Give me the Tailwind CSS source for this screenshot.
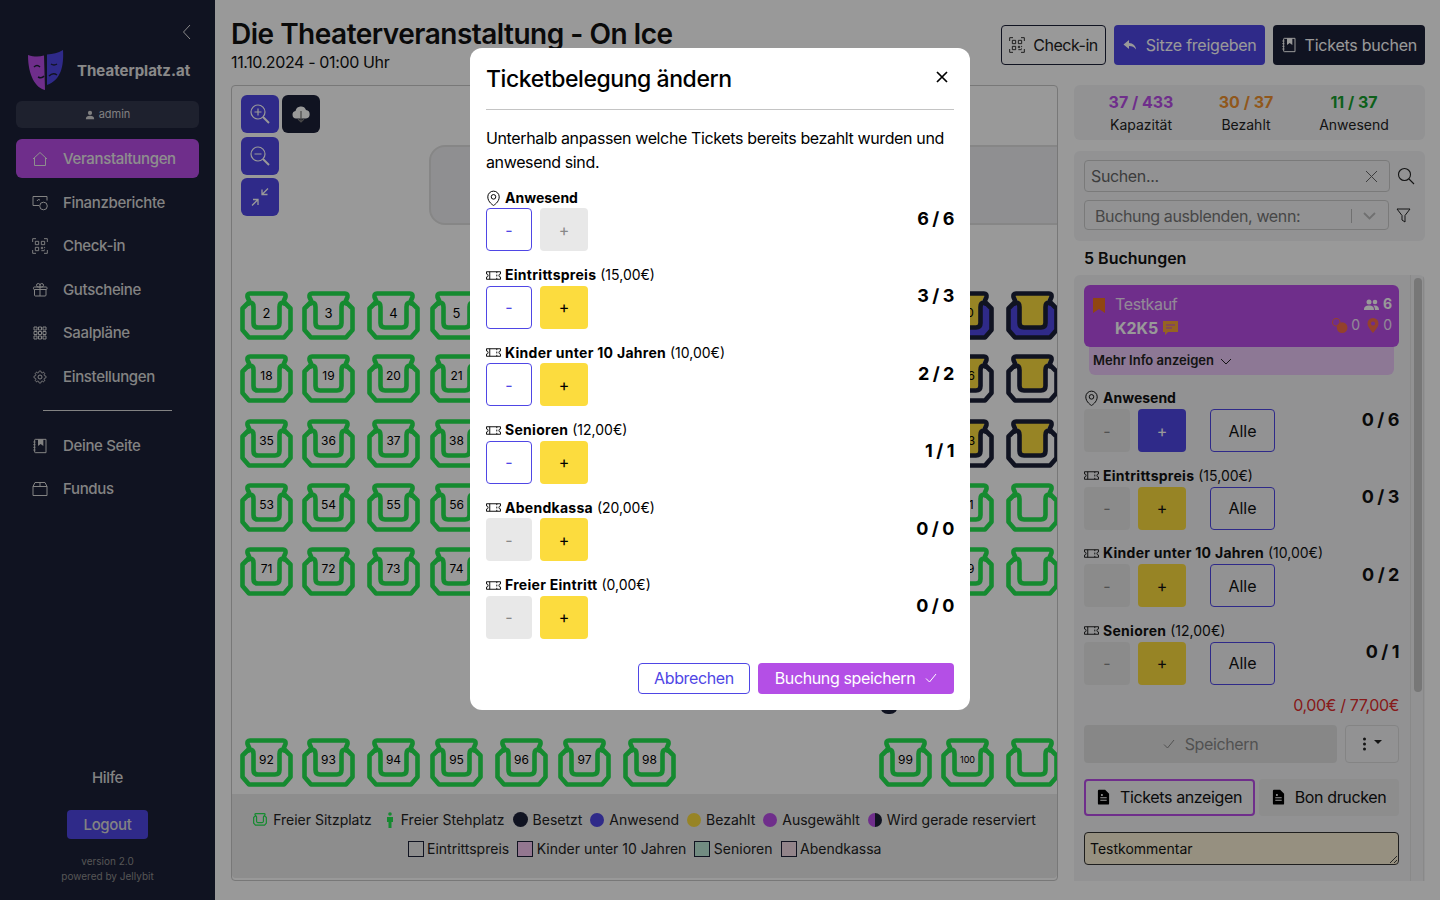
<!DOCTYPE html>
<html lang="de">
<head>
<meta charset="utf-8">
<title>Theaterplatz.at</title>
<script src="https://cdn.jsdelivr.net/npm/@tailwindcss/browser@4"></script>
</head>
<body class="font-[Inter,sans-serif] text-[#111] bg-white">
<svg class="hidden">
  <symbol id="seat" viewBox="0 0 53 50"><path fill="none" stroke="currentColor" stroke-width="4.600" stroke-linejoin="round" d="M11 14 L7.500 6 Q7 2.500 10 2.500 H43 Q46 2.500 45.500 6 L42 14 M13.500 16 Q13.500 11.500 10 11.500 H8.500 L2.500 17.500 V39 L9 46.500 H44 L50.500 39 V17.500 L44.500 11.500 H43 Q39.500 11.500 39.500 16 V32 Q39.500 36.500 35 36.500 H18 Q13.500 36.500 13.500 32 Z"/></symbol>
  <symbol id="gold" viewBox="0 0 53 50"><path fill="#fcdc3e" d="M9 4 H44 L39 14 V35 H14 V14 Z"/></symbol>
  <symbol id="blue" viewBox="0 0 53 50"><path fill="#4f46e5" d="M13.500 16 Q13.500 11.500 10 11.500 H8.500 L2.500 17.500 V39 L9 46.500 H44 L50.500 39 V17.500 L44.500 11.500 H43 Q39.500 11.500 39.500 16 V32 Q39.500 36.500 35 36.500 H18 Q13.500 36.500 13.500 32 Z"/></symbol>
  <symbol id="ticket" viewBox="0 0 16 11"><path fill="none" stroke="currentColor" stroke-width="1" d="M.5 1.500h15v2.300a1.700 1.700 0 000 3.400v2.300H.5V7.200a1.700 1.700 0 000-3.400z M4 1.500v8 M11.500 1.500v1.500 M11.500 4.500v2 M11.500 8v1.500"/></symbol>
  <symbol id="pin" viewBox="3 1.500 18 21"><path fill="none" stroke="currentColor" stroke-width="1.300" d="M15 10.500a3 3 0 11-6 0 3 3 0 016 0z M19.500 10.500c0 7.142-7.500 11.250-7.500 11.250S4.500 17.642 4.500 10.500a7.500 7.500 0 1115 0z"/></symbol>
  <symbol id="qr" viewBox="0 0 24 24"><path fill="none" stroke="currentColor" stroke-width="1.400" d="M1 6V1h5 M18 1h5v5 M23 18v5h-5 M6 23H1v-5 M5 5h5v5H5z M14 5h5v5h-5z M5 14h5v5H5z M14 14h2v2h-2z M18 14h1v1 M14 19h5 M18 17h1"/></symbol>
  <symbol id="book" viewBox="0 0 24 24"><path fill="none" stroke="currentColor" stroke-width="1.500" d="M5 2h16v20H5a1 1 0 01-1-1V3a1 1 0 011-1z M2 6h3 M2 10h3 M2 14h3 M2 18h3"/><path fill="currentColor" d="M9 2h8v10l-4-3-4 3z"/></symbol>
  <symbol id="doc" viewBox="0 0 16 20"><path fill="currentColor" d="M2 1h8l5 5v12a1.500 1.500 0 01-1.500 1.500h-11A1.500 1.500 0 011 18V2.500A1.500 1.500 0 012 1z"/><path fill="none" stroke="#fff" stroke-width="1.300" d="M4 11h8 M4 14h8"/><circle cx="6" cy="7.500" r="1.300" fill="#fff"/></symbol>
</svg>

<div class="relative flex h-[900px] w-[1440px] overflow-hidden">
  <aside class="flex w-[215px] shrink-0 flex-col bg-[#1c2038] px-4 text-[#e5e5e5]">
    <div class="flex h-[50px] items-start justify-end pt-[24px] pr-1">
      <svg class="h-4 w-4" viewBox="0 0 16 16" fill="none" stroke="currentColor" stroke-width="1"><path d="M11 1 L4.500 8 L11 15"/></svg>
    </div>
    <div class="flex h-[51px] items-start pl-3">
      <svg class="h-10 w-9 shrink-0" viewBox="0 0 36 40">
        <path fill="#b94ee8" d="M0 5 C6 7 11 7 16 5.500 L17 40 C8 38 0 26 0 5z"/>
        <path fill="#4f46e5" d="M19 4.500 C25 4 30 3 35 0 C36 16 33 30 19 35z"/>
        <path fill="none" stroke="#1c2038" stroke-width="1.500" d="M6 17 q3 -3 6 0 M10 27 q4 2 6 -1 M23 14 q3 2 6 0 M21 26 q4 -4 8 -1"/>
      </svg>
      <span class="ml-[13px] mt-[12px] text-[15px] font-bold leading-[18px] whitespace-nowrap">Theaterplatz.at</span>
    </div>
    <div class="flex h-[27px] items-center justify-center gap-1 rounded-md bg-[#33374e] text-[11px] text-[#d6d6d6]">
      <svg class="h-2.5 w-2.5" viewBox="0 0 12 12" fill="currentColor"><circle cx="6" cy="3.500" r="2.500"/><path d="M1 11c0-3 2-4 5-4s5 1 5 4z"/></svg>admin
    </div>
    <nav class="mt-[11px] flex flex-col gap-[4.500px] text-[15px] font-medium tracking-[-0.023em] text-[#dadada]">
      <a class="flex h-[39px] items-center gap-[15px] rounded-md bg-[#b94ee8] pl-4 pt-[1.500px] text-[#ededed]"><svg class="h-4 w-4 shrink-0" viewBox="0 0 16 16" fill="none" stroke="currentColor"><path d="M1 8 L8 1.500 L15 8 M2.500 7 V14.500 H13.500 V7"/></svg>Veranstaltungen</a>
      <a class="flex h-[39px] items-center gap-[15px] pl-4 pt-[1.500px]"><svg class="h-4 w-4 shrink-0" viewBox="0 0 16 16" fill="none" stroke="currentColor"><path d="M7 10.500H1V1.500H15V5.500 M8 5a2 2 0 00-3 1"/><circle cx="11.500" cy="11" r="3.800"/></svg>Finanzberichte</a>
      <a class="flex h-[39px] items-center gap-[15px] pl-4 pt-[1.500px]"><svg class="h-4 w-4 shrink-0"><use href="#qr"/></svg>Check-in</a>
      <a class="flex h-[39px] items-center gap-[15px] pl-4 pt-[1.500px]"><svg class="h-4 w-4 shrink-0" viewBox="0 0 24 24" fill="none" stroke="currentColor" stroke-width="1.500"><path d="M21 11.250v8.250a1.500 1.500 0 01-1.500 1.500H5.250a1.500 1.500 0 01-1.500-1.500v-8.250M12 4.875A2.625 2.625 0 109.375 7.500H12m0-2.625V7.500m0-2.625A2.625 2.625 0 1114.625 7.500H12m0 0V21m-8.625-9.750h18c.621 0 1.125-.504 1.125-1.125v-1.500c0-.621-.504-1.125-1.125-1.125h-18c-.621 0-1.125.504-1.125 1.125v1.500c0 .621.504 1.125 1.125 1.125z"/></svg>Gutscheine</a>
      <a class="flex h-[39px] items-center gap-[15px] pl-4 pt-[1.500px]"><svg class="h-4 w-4 shrink-0" viewBox="0 0 16 16" fill="none" stroke="currentColor"><path d="M2 2h3v3H2z M6.500 2h3v3h-3z M11 2h3v3h-3z M2 6.500h3v3H2z M6.500 6.500h3v3h-3z M11 6.500h3v3h-3z M2 11h3v3H2z M6.500 11h3v3h-3z M11 11h3v3h-3z"/></svg>Saalpläne</a>
      <a class="flex h-[39px] items-center gap-[15px] pl-4 pt-[1.500px]"><svg class="h-4 w-4 shrink-0" viewBox="0 0 24 24" fill="none" stroke="currentColor" stroke-width="1.500"><path d="M10.343 3.940c.09-.542.56-.94 1.110-.94h1.093c.55 0 1.020.398 1.110.94l.149.894c.07.424.384.764.78.93.398.164.855.142 1.205-.108l.737-.527a1.125 1.125 0 011.450.12l.773.774c.39.389.44 1.002.12 1.450l-.527.737c-.25.35-.272.806-.107 1.204.165.397.505.71.93.78l.893.15c.543.09.94.56.94 1.109v1.094c0 .55-.397 1.020-.94 1.110l-.893.149c-.425.07-.765.383-.93.78-.165.398-.143.854.107 1.204l.527.738c.32.447.269 1.060-.12 1.450l-.774.773a1.125 1.125 0 01-1.449.12l-.738-.527c-.35-.25-.806-.272-1.203-.107-.397.165-.71.505-.781.929l-.149.894c-.09.542-.56.94-1.110.94h-1.094c-.55 0-1.019-.398-1.110-.94l-.148-.894c-.071-.424-.384-.764-.781-.93-.398-.164-.854-.142-1.204.108l-.738.527c-.447.32-1.060.269-1.450-.12l-.773-.774a1.125 1.125 0 01-.12-1.450l.527-.737c.25-.35.273-.806.108-1.204-.165-.397-.505-.71-.93-.78l-.894-.15c-.542-.09-.94-.56-.94-1.109v-1.094c0-.55.398-1.020.94-1.110l.894-.149c.424-.07.765-.383.93-.78.165-.398.143-.854-.107-1.204l-.527-.738a1.125 1.125 0 01.12-1.450l.773-.773a1.125 1.125 0 011.450-.12l.737.527c.35.25.807.272 1.204.107.397-.165.71-.505.78-.929l.15-.894z M15 12a3 3 0 11-6 0 3 3 0 016 0z"/></svg>Einstellungen</a>
      <div class="mx-[27px] my-[10px] h-px bg-[#dadada]"></div>
      <a class="flex h-[39px] items-center gap-[15px] pl-4 pt-[1.500px]"><svg class="h-4 w-4 shrink-0"><use href="#book"/></svg>Deine Seite</a>
      <a class="flex h-[39px] items-center gap-[15px] pl-4 pt-[1.500px]"><svg class="h-4 w-4 shrink-0" viewBox="0 0 16 16" fill="none" stroke="currentColor"><path d="M1 5.500h14v9H1z M1 5.500 L3 1.500 H13 L15 5.500 M8 1.500 V5.500"/></svg>Fundus</a>
    </nav>
    <div class="mt-auto flex flex-col items-center pb-[16px]">
      <span class="pt-[1px] text-[15px] font-medium leading-5 tracking-[-0.023em] text-[#dadada]">Hilfe</span>
      <span class="mt-[22px] flex h-[29px] w-[81px] items-center justify-center rounded bg-[#4f46e5] pt-[2px] text-[15px] font-medium tracking-[-0.023em] text-[#dadada]">Logout</span>
      <span class="mt-[15px] text-[10px] leading-[15px] text-[#8f8f8f]">version 2.0</span>
      <span class="text-[10px] leading-[15px] text-[#8f8f8f]">powered by Jellybit</span>
    </div>
  </aside>

  <main class="flex flex-1 flex-col px-4 pb-[19px]">
    <header class="flex h-[85px] shrink-0 justify-between">
      <div class="pt-[15px]">
        <h1 class="text-[28px] font-semibold leading-[38px] tracking-[-0.018em]">Die Theaterveranstaltung - On Ice</h1>
        <p class="-mt-[3px] text-base leading-6 tracking-[-0.023em]">11.10.2024 - 01:00 Uhr</p>
      </div>
      <div class="mt-[25px] flex h-10 gap-2 text-base tracking-[-0.015em]">
        <span class="flex items-center gap-2 rounded border border-[#1c2038] px-[7px] tracking-[-0.03em] text-[#222]"><svg class="h-4 w-4"><use href="#qr"/></svg>Check-in</span>
        <span class="flex items-center gap-2 rounded bg-[#4f46e5] px-2 text-white"><svg class="h-4 w-4" viewBox="0 0 16 16" fill="currentColor"><path d="M7 3 L1.500 7.500 L7 12 V9 C10 9 12.500 10 14 12.500 C14 9 11 6 7 6z"/></svg><span>Sitze freigeben</span></span>
        <span class="flex items-center gap-2 rounded bg-[#1c2038] px-2 text-white"><svg class="h-4 w-4"><use href="#book"/></svg>Tickets buchen</span>
      </div>
    </header>

    <div class="flex min-h-0 flex-1 gap-4">
      <!-- Saalplan -->
      <section class="relative w-[827px] shrink-0 overflow-hidden rounded border border-[#c8c8c8]">
        <div class="absolute left-[9px] top-[9px] flex flex-col gap-[3.500px]">
          <span class="flex h-[38px] w-[38px] items-center justify-center rounded-md bg-[#4f46e5] text-white"><svg class="h-6 w-6" viewBox="0 0 24 24" fill="none" stroke="currentColor" stroke-width="1.200"><circle cx="10" cy="10" r="7"/><path d="M10 6.500v7 M6.500 10h7"/><path stroke-width="2" d="M15 15l6 6"/></svg></span>
          <span class="flex h-[38px] w-[38px] items-center justify-center rounded-md bg-[#4f46e5] text-white"><svg class="h-6 w-6" viewBox="0 0 24 24" fill="none" stroke="currentColor" stroke-width="1.200"><circle cx="10" cy="10" r="7"/><path d="M6.500 10h7"/><path stroke-width="2" d="M15 15l6 6"/></svg></span>
          <span class="flex h-[38px] w-[38px] items-center justify-center rounded-md bg-[#4f46e5] text-white"><svg class="h-5 w-5" viewBox="0 0 20 20" fill="none" stroke="currentColor" stroke-width="1.300"><path d="M18 1.500 L12 7.500 M12 2.500 V7.500 H17.500 M2 18.500 L8 12.500 M3 12.500 H8 V18"/></svg></span>
        </div>
        <span class="absolute left-[50px] top-[9px] flex h-[38px] w-[38px] items-center justify-center rounded-md bg-[#1c2038] text-white"><svg class="h-5 w-5" viewBox="0 0 20 20"><path fill="currentColor" d="M5 14.500a3.800 3.800 0 01-.5-7.500A5.500 5.500 0 0115 6a4.300 4.300 0 010 8.500z"/><path fill="none" stroke="#777" stroke-width="1.200" d="M10 7v11 M7 15l3 3 3-3"/></svg></span>
        <div class="absolute left-[197px] top-[59px] h-[80px] w-[800px] rounded-2xl border-2 border-[#e0e0e0] bg-[#efeff2]"></div>

        <!-- Reihe 1 -->
        <div class="absolute left-[8px] top-[205px] h-[50px] w-[53px] text-[#23e650]"><svg class="h-full w-full"><use href="#seat"/></svg><span class="absolute inset-x-0 top-[15px] text-center text-[13px] leading-[14px] text-black">2</span></div>
        <div class="absolute left-[70px] top-[205px] h-[50px] w-[53px] text-[#23e650]"><svg class="h-full w-full"><use href="#seat"/></svg><span class="absolute inset-x-0 top-[15px] text-center text-[13px] leading-[14px] text-black">3</span></div>
        <div class="absolute left-[135px] top-[205px] h-[50px] w-[53px] text-[#23e650]"><svg class="h-full w-full"><use href="#seat"/></svg><span class="absolute inset-x-0 top-[15px] text-center text-[13px] leading-[14px] text-black">4</span></div>
        <div class="absolute left-[198px] top-[205px] h-[50px] w-[53px] text-[#23e650]"><svg class="h-full w-full"><use href="#seat"/></svg><span class="absolute inset-x-0 top-[15px] text-center text-[13px] leading-[14px] text-black">5</span></div>
        <div class="absolute left-[709px] top-[205px] h-[50px] w-[53px] text-[#1c2038]"><svg class="absolute inset-0 h-full w-full"><use href="#blue"/></svg><svg class="absolute inset-0 h-full w-full"><use href="#gold"/></svg><svg class="absolute inset-0 h-full w-full"><use href="#seat"/></svg><span class="absolute inset-x-0 top-[15px] text-center text-[12px] leading-[14px] text-black">10</span></div>
        <div class="absolute left-[774px] top-[205px] h-[50px] w-[53px] text-[#1c2038]"><svg class="absolute inset-0 h-full w-full"><use href="#blue"/></svg><svg class="absolute inset-0 h-full w-full"><use href="#gold"/></svg><svg class="absolute inset-0 h-full w-full"><use href="#seat"/></svg></div>
        <!-- Reihe 2 -->
        <div class="absolute left-[8px] top-[268px] h-[50px] w-[53px] text-[#23e650]"><svg class="h-full w-full"><use href="#seat"/></svg><span class="absolute inset-x-0 top-[15px] text-center text-[12px] leading-[14px] text-black">18</span></div>
        <div class="absolute left-[70px] top-[268px] h-[50px] w-[53px] text-[#23e650]"><svg class="h-full w-full"><use href="#seat"/></svg><span class="absolute inset-x-0 top-[15px] text-center text-[12px] leading-[14px] text-black">19</span></div>
        <div class="absolute left-[135px] top-[268px] h-[50px] w-[53px] text-[#23e650]"><svg class="h-full w-full"><use href="#seat"/></svg><span class="absolute inset-x-0 top-[15px] text-center text-[12px] leading-[14px] text-black">20</span></div>
        <div class="absolute left-[198px] top-[268px] h-[50px] w-[53px] text-[#23e650]"><svg class="h-full w-full"><use href="#seat"/></svg><span class="absolute inset-x-0 top-[15px] text-center text-[12px] leading-[14px] text-black">21</span></div>
        <div class="absolute left-[709px] top-[268px] h-[50px] w-[53px] text-[#1c2038]"><svg class="absolute inset-0 h-full w-full"><use href="#gold"/></svg><svg class="absolute inset-0 h-full w-full"><use href="#seat"/></svg><span class="absolute inset-x-0 top-[15px] text-center text-[12px] leading-[14px] text-black">26</span></div>
        <div class="absolute left-[774px] top-[268px] h-[50px] w-[53px] text-[#1c2038]"><svg class="absolute inset-0 h-full w-full"><use href="#gold"/></svg><svg class="absolute inset-0 h-full w-full"><use href="#seat"/></svg></div>
        <!-- Reihe 3 -->
        <div class="absolute left-[8px] top-[333px] h-[50px] w-[53px] text-[#23e650]"><svg class="h-full w-full"><use href="#seat"/></svg><span class="absolute inset-x-0 top-[15px] text-center text-[12px] leading-[14px] text-black">35</span></div>
        <div class="absolute left-[70px] top-[333px] h-[50px] w-[53px] text-[#23e650]"><svg class="h-full w-full"><use href="#seat"/></svg><span class="absolute inset-x-0 top-[15px] text-center text-[12px] leading-[14px] text-black">36</span></div>
        <div class="absolute left-[135px] top-[333px] h-[50px] w-[53px] text-[#23e650]"><svg class="h-full w-full"><use href="#seat"/></svg><span class="absolute inset-x-0 top-[15px] text-center text-[12px] leading-[14px] text-black">37</span></div>
        <div class="absolute left-[198px] top-[333px] h-[50px] w-[53px] text-[#23e650]"><svg class="h-full w-full"><use href="#seat"/></svg><span class="absolute inset-x-0 top-[15px] text-center text-[12px] leading-[14px] text-black">38</span></div>
        <div class="absolute left-[709px] top-[333px] h-[50px] w-[53px] text-[#1c2038]"><svg class="absolute inset-0 h-full w-full"><use href="#gold"/></svg><svg class="absolute inset-0 h-full w-full"><use href="#seat"/></svg><span class="absolute inset-x-0 top-[15px] text-center text-[12px] leading-[14px] text-black">43</span></div>
        <div class="absolute left-[774px] top-[333px] h-[50px] w-[53px] text-[#1c2038]"><svg class="absolute inset-0 h-full w-full"><use href="#gold"/></svg><svg class="absolute inset-0 h-full w-full"><use href="#seat"/></svg></div>
        <!-- Reihe 4 -->
        <div class="absolute left-[8px] top-[397px] h-[50px] w-[53px] text-[#23e650]"><svg class="h-full w-full"><use href="#seat"/></svg><span class="absolute inset-x-0 top-[15px] text-center text-[12px] leading-[14px] text-black">53</span></div>
        <div class="absolute left-[70px] top-[397px] h-[50px] w-[53px] text-[#23e650]"><svg class="h-full w-full"><use href="#seat"/></svg><span class="absolute inset-x-0 top-[15px] text-center text-[12px] leading-[14px] text-black">54</span></div>
        <div class="absolute left-[135px] top-[397px] h-[50px] w-[53px] text-[#23e650]"><svg class="h-full w-full"><use href="#seat"/></svg><span class="absolute inset-x-0 top-[15px] text-center text-[12px] leading-[14px] text-black">55</span></div>
        <div class="absolute left-[198px] top-[397px] h-[50px] w-[53px] text-[#23e650]"><svg class="h-full w-full"><use href="#seat"/></svg><span class="absolute inset-x-0 top-[15px] text-center text-[12px] leading-[14px] text-black">56</span></div>
        <div class="absolute left-[709px] top-[397px] h-[50px] w-[53px] text-[#23e650]"><svg class="h-full w-full"><use href="#seat"/></svg><span class="absolute inset-x-0 top-[15px] text-center text-[12px] leading-[14px] text-black">61</span></div>
        <div class="absolute left-[774px] top-[397px] h-[50px] w-[53px] text-[#23e650]"><svg class="h-full w-full"><use href="#seat"/></svg></div>
        <!-- Reihe 5 -->
        <div class="absolute left-[8px] top-[461px] h-[50px] w-[53px] text-[#23e650]"><svg class="h-full w-full"><use href="#seat"/></svg><span class="absolute inset-x-0 top-[15px] text-center text-[12px] leading-[14px] text-black">71</span></div>
        <div class="absolute left-[70px] top-[461px] h-[50px] w-[53px] text-[#23e650]"><svg class="h-full w-full"><use href="#seat"/></svg><span class="absolute inset-x-0 top-[15px] text-center text-[12px] leading-[14px] text-black">72</span></div>
        <div class="absolute left-[135px] top-[461px] h-[50px] w-[53px] text-[#23e650]"><svg class="h-full w-full"><use href="#seat"/></svg><span class="absolute inset-x-0 top-[15px] text-center text-[12px] leading-[14px] text-black">73</span></div>
        <div class="absolute left-[198px] top-[461px] h-[50px] w-[53px] text-[#23e650]"><svg class="h-full w-full"><use href="#seat"/></svg><span class="absolute inset-x-0 top-[15px] text-center text-[12px] leading-[14px] text-black">74</span></div>
        <div class="absolute left-[709px] top-[461px] h-[50px] w-[53px] text-[#23e650]"><svg class="h-full w-full"><use href="#seat"/></svg><span class="absolute inset-x-0 top-[15px] text-center text-[12px] leading-[14px] text-black">79</span></div>
        <div class="absolute left-[774px] top-[461px] h-[50px] w-[53px] text-[#23e650]"><svg class="h-full w-full"><use href="#seat"/></svg></div>
        <!-- teilweise verdeckter Platz -->
        <div class="absolute left-[648px] top-[610px] h-[18px] w-[18px] rounded-b-lg bg-[#1c2038]"></div>
        <!-- Reihe 6 -->
        <div class="absolute left-[8px] top-[652px] h-[50px] w-[53px] text-[#23e650]"><svg class="h-full w-full"><use href="#seat"/></svg><span class="absolute inset-x-0 top-[15px] text-center text-[12px] leading-[14px] text-black">92</span></div>
        <div class="absolute left-[70px] top-[652px] h-[50px] w-[53px] text-[#23e650]"><svg class="h-full w-full"><use href="#seat"/></svg><span class="absolute inset-x-0 top-[15px] text-center text-[12px] leading-[14px] text-black">93</span></div>
        <div class="absolute left-[135px] top-[652px] h-[50px] w-[53px] text-[#23e650]"><svg class="h-full w-full"><use href="#seat"/></svg><span class="absolute inset-x-0 top-[15px] text-center text-[12px] leading-[14px] text-black">94</span></div>
        <div class="absolute left-[198px] top-[652px] h-[50px] w-[53px] text-[#23e650]"><svg class="h-full w-full"><use href="#seat"/></svg><span class="absolute inset-x-0 top-[15px] text-center text-[12px] leading-[14px] text-black">95</span></div>
        <div class="absolute left-[263px] top-[652px] h-[50px] w-[53px] text-[#23e650]"><svg class="h-full w-full"><use href="#seat"/></svg><span class="absolute inset-x-0 top-[15px] text-center text-[12px] leading-[14px] text-black">96</span></div>
        <div class="absolute left-[326px] top-[652px] h-[50px] w-[53px] text-[#23e650]"><svg class="h-full w-full"><use href="#seat"/></svg><span class="absolute inset-x-0 top-[15px] text-center text-[12px] leading-[14px] text-black">97</span></div>
        <div class="absolute left-[391px] top-[652px] h-[50px] w-[53px] text-[#23e650]"><svg class="h-full w-full"><use href="#seat"/></svg><span class="absolute inset-x-0 top-[15px] text-center text-[12px] leading-[14px] text-black">98</span></div>
        <div class="absolute left-[647px] top-[652px] h-[50px] w-[53px] text-[#23e650]"><svg class="h-full w-full"><use href="#seat"/></svg><span class="absolute inset-x-0 top-[15px] text-center text-[12px] leading-[14px] text-black">99</span></div>
        <div class="absolute left-[709px] top-[652px] h-[50px] w-[53px] text-[#23e650]"><svg class="h-full w-full"><use href="#seat"/></svg><span class="absolute inset-x-0 top-[15px] text-center text-[9px] leading-[14px] text-black">100</span></div>
        <div class="absolute left-[774px] top-[652px] h-[50px] w-[53px] text-[#23e650]"><svg class="h-full w-full"><use href="#seat"/></svg></div>

        <!-- Legende -->
        <div class="absolute inset-x-0 bottom-[2px] flex h-[84px] flex-col items-center justify-center gap-[9px] rounded-b bg-[#ebebeb] pb-[4px] text-sm text-[#222]">
          <div class="flex h-5 items-center gap-[8px]">
            <span class="flex items-center gap-[6px]"><svg class="h-[15px] w-[14px] text-[#23e650]"><use href="#seat"/></svg>Freier Sitzplatz</span>
            <span class="flex items-center gap-[6px] pl-[5px]"><svg class="h-4 w-[10px] text-[#23e650]" viewBox="0 0 10 16" fill="currentColor"><circle cx="5" cy="2" r="1.800"/><path d="M2 5h6v5H6.500v6h-3v-6H2z"/></svg>Freier Stehplatz</span>
            <span class="flex items-center gap-[5px]"><i class="h-[15px] w-[15px] rounded-full bg-[#1c2038]"></i>Besetzt</span>
            <span class="flex items-center gap-[5px]"><i class="h-[14px] w-[14px] rounded-full bg-[#4f46e5]"></i>Anwesend</span>
            <span class="flex items-center gap-[5px]"><i class="h-[14px] w-[14px] rounded-full bg-[#fcdc3e]"></i>Bezahlt</span>
            <span class="flex items-center gap-[5px]"><i class="h-[14px] w-[14px] rounded-full bg-[#b94ee8]"></i>Ausgewählt</span>
            <span class="flex items-center gap-[5px]"><i class="h-[14px] w-[14px] rounded-full bg-[linear-gradient(90deg,#b94ee8_50%,#1c2038_50%)]"></i>Wird gerade reserviert</span>
          </div>
          <div class="flex h-5 items-center gap-[8px]">
            <span class="flex items-center gap-[3.500px]"><i class="h-4 w-4 border border-[#1c2038]"></i>Eintrittspreis</span>
            <span class="flex items-center gap-[3.500px]"><i class="h-4 w-4 border border-[#1c2038] bg-[#f5c6f0]"></i>Kinder unter 10 Jahren</span>
            <span class="flex items-center gap-[3.500px]"><i class="h-4 w-4 border border-[#1c2038] bg-[#bfead9]"></i>Senioren</span>
            <span class="flex items-center gap-[3.500px]"><i class="h-4 w-4 border border-[#1c2038] bg-[#f3dce6]"></i>Abendkassa</span>
          </div>
        </div>
      </section>

      <!-- Rechte Spalte -->
      <section class="flex min-w-0 flex-1 flex-col">
        <div class="grid h-[55px] shrink-0 grid-cols-[134px_76px_140px] rounded-md bg-[#f3f4f6] pt-[7px] text-center">
          <div><p class="text-base font-bold leading-5 text-[#b94ee8] whitespace-nowrap">37 / 433</p><p class="mt-[3px] text-sm leading-5 text-[#222]">Kapazität</p></div>
          <div><p class="text-base font-bold leading-5 text-[#f0922f] whitespace-nowrap">30 / 37</p><p class="mt-[3px] text-sm leading-5 text-[#222]">Bezahlt</p></div>
          <div><p class="text-base font-bold leading-5 text-[#16a02e] whitespace-nowrap">11 / 37</p><p class="mt-[3px] text-sm leading-5 text-[#222]">Anwesend</p></div>
        </div>
        <div class="mt-[11px] flex h-[90px] shrink-0 flex-col rounded-md bg-[#f3f4f6] px-[10px] pt-[9px]">
          <div class="flex items-center">
            <div class="flex h-[32px] w-[306px] items-center justify-between rounded-sm border border-[#ccc] px-[6px] text-base tracking-[-0.023em] text-[#666]">Suchen...<svg class="mr-[5px] h-[13px] w-[13px] text-[#666]" viewBox="0 0 13 13" fill="none" stroke="currentColor"><path d="M1 1l11 11M12 1L1 12"/></svg></div>
            <svg class="ml-[7px] h-[18px] w-[18px] text-[#222]" viewBox="0 0 18 18" fill="none" stroke="currentColor" stroke-width="1.100"><circle cx="7.500" cy="7.500" r="6"/><path d="M12 12l5 5"/></svg>
          </div>
          <div class="mt-[8px] flex items-center">
            <div class="flex h-[30px] w-[305px] items-center justify-between rounded-sm border border-[#ccc] pl-[10px] pr-[12px] pt-[1px] text-base tracking-[-0.023em] text-[#777]">Buchung ausblenden, wenn:<span class="flex items-center gap-[11px]"><i class="h-[14px] w-px bg-[#bbb]"></i><svg class="h-[8px] w-[13px] text-[#bbb]" viewBox="0 0 13 8" fill="none" stroke="currentColor" stroke-width="1.800"><path d="M1 1l5.500 5.500L12 1"/></svg></span></div>
            <svg class="ml-[7px] h-[15px] w-[15px] text-[#222]" viewBox="0 0 15 15" fill="none" stroke="currentColor"><path d="M1 1h13L9 7.500V14L6 12V7.500z"/></svg>
          </div>
        </div>
        <h2 class="flex h-[34px] shrink-0 items-center px-[10px] text-base font-semibold">5 Buchungen</h2>
        <div class="relative min-h-0 flex-1 overflow-hidden rounded-t-md bg-[#f3f4f6] px-[10px] pt-[10px]">
          <div class="absolute inset-y-0 right-[1px] w-[14px] border-x border-[#e4e4e4]"><div class="ml-[3px] mt-[3px] h-[414px] w-[8px] rounded bg-[#c6c6c6]"></div></div>
          <div class="w-[315px]">
            <div class="flex h-[62px] justify-between rounded-md bg-[#b94ee8] text-white">
              <div class="flex pl-[9px] pt-[12px]">
                <svg class="h-4 w-3 text-[#f0751f]" viewBox="0 0 12 16" fill="currentColor"><path d="M0 1h12v15L6 12 0 16z"/></svg>
                <div class="ml-[10px] -mt-[5px]">
                  <p class="text-base leading-6 tracking-[-0.023em] text-[#f4e4fb]">Testkauf</p>
                  <p class="flex items-center gap-[4px] text-base font-bold leading-6">K2K5<svg class="h-4 w-4 text-[#f8a63a]" viewBox="0 0 16 16"><path fill="currentColor" d="M1 1h15v11H6l-3 3v-3H1z"/><path stroke="#b94ee8" stroke-width="1.200" d="M4 5h9M4 8h6"/></svg></p>
                </div>
              </div>
              <div class="flex flex-col items-end pr-[7px] pt-[9px] text-sm leading-5">
                <p class="flex items-center gap-[4px] font-bold"><svg class="h-[11px] w-[15px]" viewBox="0 0 15 11" fill="currentColor"><circle cx="5" cy="3" r="2.500"/><circle cx="11" cy="3" r="2.300"/><path d="M0 11c0-3.500 2-4.500 5-4.500s5 1 5 4.500z M11 11c0-2-.5-3.500-1.800-4.300C13 6 15 7.500 15 11z"/></svg>6</p>
                <p class="mt-[1px] flex items-center gap-[3px] text-[#f4e4fb]"><svg class="h-[15px] w-[16px] text-[#f76d4a]" viewBox="0 0 15 14" fill="currentColor"><circle cx="4" cy="4" r="3.500" fill="none" stroke="currentColor"/><circle cx="9.500" cy="9" r="5"/></svg>0<svg class="ml-[4px] h-[15px] w-[12px] text-[#f76d4a]" viewBox="0 0 11 15" fill="currentColor"><path d="M5.500 0a5.500 5.500 0 015.500 5.500C11 9 7 13 5.500 15 4 13 0 9 0 5.500A5.500 5.500 0 015.500 0z"/><circle cx="5.500" cy="5.500" r="2" fill="#b94ee8"/></svg><span class="ml-[1px]">0</span></p>
              </div>
            </div>
            <div class="mx-[5px] flex h-[28px] items-center gap-[6px] rounded-b-md bg-[#ecc9f8] px-1 text-[13px] font-semibold text-[#222]">Mehr Info anzeigen<svg class="h-[7px] w-[12px]" viewBox="0 0 12 7" fill="none" stroke="currentColor"><path d="M1 1l5 5 5-5"/></svg></div>

            <div class="mt-[13px] h-[65px]">
              <p class="flex h-[21px] items-center gap-[4px] pb-[2px] text-sm font-bold leading-5"><svg class="h-4 w-[15px] shrink-0"><use href="#pin"/></svg>Anwesend</p>
              <div class="flex items-center">
                <span class="flex h-[43px] w-[46px] items-center justify-center rounded bg-[#e8e8e8] text-[#888]">-</span>
                <span class="ml-2 flex h-[43px] w-[48px] items-center justify-center rounded bg-[#4f46e5] text-white">+</span>
                <span class="ml-6 flex h-[43px] w-[65px] items-center justify-center rounded border border-[#4f46e5] text-base">Alle</span>
                <span class="-mt-[22px] ml-auto text-lg font-bold tracking-[-0.023em]">0 / 6</span>
              </div>
            </div>
            <div class="mt-[12.500px] h-[65px]">
              <p class="flex h-[21px] items-center gap-[4px] pb-[1px] text-sm leading-5"><svg class="h-[11px] w-[15px] shrink-0"><use href="#ticket"/></svg><span><b class="font-bold tracking-[0.02em]">Eintrittspreis</b>&nbsp;(15,00€)</span></p>
              <div class="flex items-center">
                <span class="flex h-[43px] w-[46px] items-center justify-center rounded bg-[#e8e8e8] text-[#888]">-</span>
                <span class="ml-2 flex h-[43px] w-[48px] items-center justify-center rounded bg-[#fcdc3e]">+</span>
                <span class="ml-6 flex h-[43px] w-[65px] items-center justify-center rounded border border-[#4f46e5] text-base">Alle</span>
                <span class="-mt-[22px] ml-auto text-lg font-bold tracking-[-0.023em]">0 / 3</span>
              </div>
            </div>
            <div class="mt-[12.500px] h-[65px]">
              <p class="flex h-[21px] items-center gap-[4px] pb-[1px] text-sm leading-5"><svg class="h-[11px] w-[15px] shrink-0"><use href="#ticket"/></svg><span><b class="font-bold tracking-[0.02em]">Kinder unter 10 Jahren</b>&nbsp;(10,00€)</span></p>
              <div class="flex items-center">
                <span class="flex h-[43px] w-[46px] items-center justify-center rounded bg-[#e8e8e8] text-[#888]">-</span>
                <span class="ml-2 flex h-[43px] w-[48px] items-center justify-center rounded bg-[#fcdc3e]">+</span>
                <span class="ml-6 flex h-[43px] w-[65px] items-center justify-center rounded border border-[#4f46e5] text-base">Alle</span>
                <span class="-mt-[22px] ml-auto text-lg font-bold tracking-[-0.023em]">0 / 2</span>
              </div>
            </div>
            <div class="mt-[12.500px] h-[65px]">
              <p class="flex h-[21px] items-center gap-[4px] pb-[1px] text-sm leading-5"><svg class="h-[11px] w-[15px] shrink-0"><use href="#ticket"/></svg><span><b class="font-bold tracking-[0.02em]">Senioren</b>&nbsp;(12,00€)</span></p>
              <div class="flex items-center">
                <span class="flex h-[43px] w-[46px] items-center justify-center rounded bg-[#e8e8e8] text-[#888]">-</span>
                <span class="ml-2 flex h-[43px] w-[48px] items-center justify-center rounded bg-[#fcdc3e]">+</span>
                <span class="ml-6 flex h-[43px] w-[65px] items-center justify-center rounded border border-[#4f46e5] text-base">Alle</span>
                <span class="-mt-[22px] ml-auto text-lg font-bold tracking-[-0.023em]">0 / 1</span>
              </div>
            </div>
            <p class="mt-[7px] text-right text-base leading-6 tracking-[-0.023em] text-[#e12c2c]">0,00€ / 77,00€</p>
            <div class="mt-[8px] flex h-[38px] gap-2">
              <span class="flex flex-1 items-center justify-center gap-[10px] rounded bg-[#e2e2e2] text-base tracking-[-0.023em] text-[#888]"><svg class="h-3 w-3" viewBox="0 0 12 12" fill="none" stroke="currentColor"><path d="M1 6.500l3.500 3.500L11 2"/></svg>Speichern</span>
              <span class="flex w-[54px] items-center justify-center gap-[8px] rounded border border-[#ddd]"><svg class="h-[14px] w-[3px]" viewBox="0 0 3 14" fill="#222"><circle cx="1.500" cy="2" r="1.500"/><circle cx="1.500" cy="7" r="1.500"/><circle cx="1.500" cy="12" r="1.500"/></svg><i class="mb-[3px] border-x-[4px] border-t-[4px] border-x-transparent border-t-[#222]"></i></span>
            </div>
            <div class="mt-[16px] flex h-[37px] gap-[4px] text-base tracking-[-0.023em]">
              <span class="flex w-[171px] items-center justify-center gap-[10px] rounded border-2 border-[#b94ee8] text-[#111]"><svg class="h-[16px] w-[13px] text-black"><use href="#doc"/></svg>Tickets anzeigen</span>
              <span class="flex flex-1 items-center justify-center gap-[10px] rounded bg-[#ebebeb] text-[#111]"><svg class="h-[16px] w-[13px] text-black"><use href="#doc"/></svg>Bon drucken</span>
            </div>
            <div class="relative mt-[16px] h-[33px] rounded-sm border border-[#333] bg-[#fbf1d5] px-[5px] pt-[6px] text-sm leading-5">Testkommentar<svg class="absolute bottom-[1px] right-[1px] h-2 w-2 text-[#444]" viewBox="0 0 8 8" fill="none" stroke="currentColor"><path d="M1 8l7-7M5 8l3-3"/></svg></div>
          </div>
        </div>
      </section>
    </div>
  </main>

  <!-- Abdunklung -->
  <div class="absolute inset-0 bg-black/40"></div>

  <!-- Dialog -->
  <div class="absolute left-[470px] top-[48px] h-[662px] w-[500px] rounded-xl bg-white px-4 text-black">
    <div class="relative flex h-[62px] items-center border-b border-[#c4c4c4]">
      <h2 class="mt-[1px] text-[23px] font-medium leading-8 tracking-[-0.019em]">Ticketbelegung ändern</h2>
      <svg class="absolute right-[6px] top-[23px] h-3 w-3" viewBox="0 0 12 12" fill="none" stroke="currentColor" stroke-width="1.700"><path d="M1 1l10 10M11 1L1 11"/></svg>
    </div>
    <p class="mt-[16px] text-base leading-6 tracking-[-0.023em]">Unterhalb anpassen welche Tickets bereits bezahlt wurden und anwesend sind.</p>

    <div class="mt-[12px] flex h-[65px] items-center justify-between">
      <div>
        <p class="flex h-[22px] items-center gap-[4px] pt-[1px] text-sm"><svg class="h-4 w-[15px] shrink-0"><use href="#pin"/></svg><b class="font-bold">Anwesend</b></p>
        <div class="flex gap-2"><span class="flex h-[43px] w-[46px] items-center justify-center rounded border border-[#4f46e5] text-[#4f46e5]">-</span><span class="flex h-[43px] w-[48px] items-center justify-center rounded bg-[#e8e8e8] text-[#888]">+</span></div>
      </div>
      <span class="text-lg font-bold tracking-[-0.023em]">6 / 6</span>
    </div>
    <div class="mt-[12.600px] flex h-[65px] items-center justify-between">
      <div>
        <p class="flex h-[22px] items-center gap-[4px] pt-[1px] text-sm"><svg class="h-[11px] w-[15px] shrink-0"><use href="#ticket"/></svg><span><b class="font-bold tracking-[0.02em]">Eintrittspreis</b>&nbsp;(15,00€)</span></p>
        <div class="flex gap-2"><span class="flex h-[43px] w-[46px] items-center justify-center rounded border border-[#4f46e5] text-[#4f46e5]">-</span><span class="flex h-[43px] w-[48px] items-center justify-center rounded bg-[#fcdc3e]">+</span></div>
      </div>
      <span class="text-lg font-bold tracking-[-0.023em]">3 / 3</span>
    </div>
    <div class="mt-[12.600px] flex h-[65px] items-center justify-between">
      <div>
        <p class="flex h-[22px] items-center gap-[4px] pt-[1px] text-sm"><svg class="h-[11px] w-[15px] shrink-0"><use href="#ticket"/></svg><span><b class="font-bold tracking-[0.02em]">Kinder unter 10 Jahren</b>&nbsp;(10,00€)</span></p>
        <div class="flex gap-2"><span class="flex h-[43px] w-[46px] items-center justify-center rounded border border-[#4f46e5] text-[#4f46e5]">-</span><span class="flex h-[43px] w-[48px] items-center justify-center rounded bg-[#fcdc3e]">+</span></div>
      </div>
      <span class="text-lg font-bold tracking-[-0.023em]">2 / 2</span>
    </div>
    <div class="mt-[12.600px] flex h-[65px] items-center justify-between">
      <div>
        <p class="flex h-[22px] items-center gap-[4px] pt-[1px] text-sm"><svg class="h-[11px] w-[15px] shrink-0"><use href="#ticket"/></svg><span><b class="font-bold tracking-[0.02em]">Senioren</b>&nbsp;(12,00€)</span></p>
        <div class="flex gap-2"><span class="flex h-[43px] w-[46px] items-center justify-center rounded border border-[#4f46e5] text-[#4f46e5]">-</span><span class="flex h-[43px] w-[48px] items-center justify-center rounded bg-[#fcdc3e]">+</span></div>
      </div>
      <span class="text-lg font-bold tracking-[-0.023em]">1 / 1</span>
    </div>
    <div class="mt-[12.600px] flex h-[65px] items-center justify-between">
      <div>
        <p class="flex h-[22px] items-center gap-[4px] pt-[1px] text-sm"><svg class="h-[11px] w-[15px] shrink-0"><use href="#ticket"/></svg><span><b class="font-bold tracking-[0.02em]">Abendkassa</b>&nbsp;(20,00€)</span></p>
        <div class="flex gap-2"><span class="flex h-[43px] w-[46px] items-center justify-center rounded bg-[#e8e8e8] text-[#888]">-</span><span class="flex h-[43px] w-[48px] items-center justify-center rounded bg-[#fcdc3e]">+</span></div>
      </div>
      <span class="text-lg font-bold tracking-[-0.023em]">0 / 0</span>
    </div>
    <div class="mt-[12.600px] flex h-[65px] items-center justify-between">
      <div>
        <p class="flex h-[22px] items-center gap-[4px] pt-[1px] text-sm"><svg class="h-[11px] w-[15px] shrink-0"><use href="#ticket"/></svg><span><b class="font-bold tracking-[0.02em]">Freier Eintritt</b>&nbsp;(0,00€)</span></p>
        <div class="flex gap-2"><span class="flex h-[43px] w-[46px] items-center justify-center rounded bg-[#e8e8e8] text-[#888]">-</span><span class="flex h-[43px] w-[48px] items-center justify-center rounded bg-[#fcdc3e]">+</span></div>
      </div>
      <span class="text-lg font-bold tracking-[-0.023em]">0 / 0</span>
    </div>

    <div class="mt-[24px] flex justify-end gap-2 text-base tracking-[-0.023em]">
      <span class="flex h-[31px] w-[112px] items-center justify-center rounded border border-[#4f46e5] text-[#4f46e5]">Abbrechen</span>
      <span class="flex h-[31px] w-[196px] items-center justify-center gap-[10px] rounded bg-[#b44fe6] text-white">Buchung speichern<svg class="h-3 w-3" viewBox="0 0 12 12" fill="none" stroke="currentColor"><path d="M1 6.500l3.500 3.500L11 2"/></svg></span>
    </div>
  </div>
</div>
</body>
</html>
